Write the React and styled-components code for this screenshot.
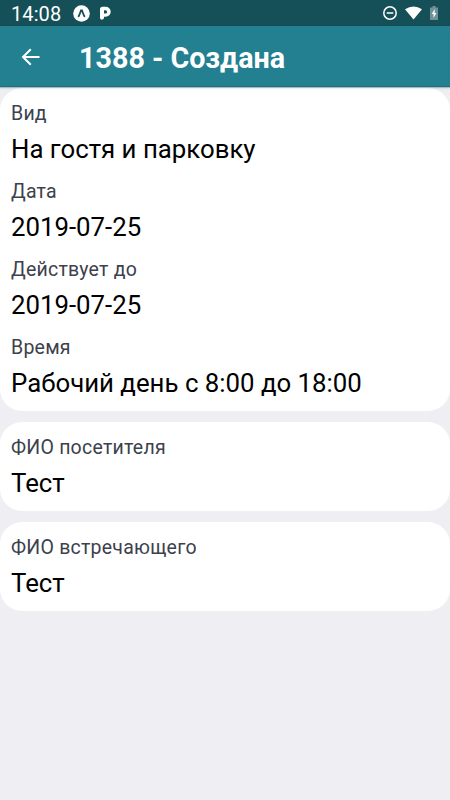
import React from 'react';
import styled, { createGlobalStyle } from 'styled-components';

const GlobalStyle = createGlobalStyle`
  * { box-sizing: border-box; }
  body { margin: 0; background: #efeef3; font-family: Roboto, sans-serif; }
`;
const Screen = styled.div`
  width: 450px; height: 800px; overflow: hidden;
  display: flex; flex-direction: column; background: #efeef3;
`;
const StatusBar = styled.header`
  height: 26px; flex: none; display: flex; align-items: center;
  padding: 0 12px 0 11px; background: #154f57; color: #fff;
`;
const Clock = styled.time`
  font-size: 20px; line-height: 26px; width: 62px; padding-top: 2px; letter-spacing: 0.1px;
`;
const StatusIcons = styled.div`
  display: flex; align-items: center; gap: ${(p) => (p.$end ? '8px' : '10px')};
  margin-left: ${(p) => (p.$end ? 'auto' : '0')};
  svg { display: block; }
`;
const Toolbar = styled.nav`
  height: 61px; flex: none; display: flex; align-items: center;
  padding-left: 21px; background: #238091; color: #fff;
  border-bottom: 1px solid #0d7788;
  box-shadow: 0 1px 1px rgba(0, 0, 0, 0.2), 0 1px 4px rgba(0, 0, 0, 0.08);
  z-index: 1;
`;
const BackButton = styled.button`
  border: 0; padding: 2px 0 0; background: none; color: inherit; width: 58px; height: 40px;
  display: flex; align-items: center;
`;
const Title = styled.h1`
  margin: 0; font-size: 28.7px; font-weight: 700; line-height: 36px; white-space: nowrap; padding-top: 4px;
`;
const Cards = styled.main`
  display: flex; flex-direction: column; gap: 11px; padding-top: 1px;
`;
const Card = styled.section`
  background: #fff; border-radius: 22px; padding: 11px 11px 9px;
`;
const Fields = styled.dl`
  margin: 0; display: flex; flex-direction: column;
`;
const Field = styled.div`
  height: 78px;
  &:last-child { height: 69px; }
`;
const Label = styled.dt`
  font-size: 19.5px; line-height: 28px; letter-spacing: 0.23px; padding-top: 1px; color: #3c414c; white-space: nowrap;
`;
const Value = styled.dd`
  margin: 5px 0 0; font-size: 25.8px; line-height: 32px; color: #000; white-space: nowrap;
`;

const groups = [
  [['Вид', 'На гостя и парковку'], ['Дата', '2019-07-25'], ['Действует до', '2019-07-25'], ['Время', 'Рабочий день с 8:00 до 18:00']],
  [['ФИО посетителя', 'Тест']],
  [['ФИО встречающего', 'Тест']],
];

export default function App() {
  return (
    <Screen>
      <GlobalStyle />
      <StatusBar>
        <Clock>14:08</Clock>
        <StatusIcons>
          <svg width="17" height="17" viewBox="0 0 17 17"><circle cx="8.5" cy="8.5" r="8.3" fill="#fff" /><path d="M5.2 11.9C6.4 10.5 7 8 8 5.4h1c1 2.6 1.6 5.1 2.8 6.5" fill="none" stroke="#154f57" strokeWidth="1.8" /></svg>
          <svg width="11" height="14" viewBox="0 0 11 14"><path fillRule="evenodd" fill="#fff" d="M0 6V3.2Q0 .7 2.5.7H5.7a5 5 0 0 1 0 10H4v.5A2 2 0 0 1 0 12ZM4 4.3V7.6H5.5a1.65 1.65 0 0 0 0-3.3Z" /></svg>
        </StatusIcons>
        <StatusIcons $end>
          <svg width="14" height="14" viewBox="0 0 14 14" fill="none" stroke="#fff" strokeWidth="1.5"><circle cx="7" cy="7" r="6.2" /><path d="M3.7 7h6.6" /></svg>
          <svg width="17" height="14" viewBox="0 0 17 14"><path d="M0 3.2Q8.5-2.4 17 3.2L8.5 13.5Z" fill="#fff" /></svg>
          <svg width="8" height="14" viewBox="0 0 8 14"><path d="M0 1.5h2.5V0h3v1.5H8V14H0Z" fill="#6f9298" /><path d="M4.7 3 1.8 8h1.7v4L6.4 7H4.7Z" fill="#fff" /></svg>
        </StatusIcons>
      </StatusBar>
      <Toolbar>
        <BackButton aria-label="Назад">
          <svg width="19" height="18" viewBox="0 0 19 18" fill="none" stroke="currentColor" strokeWidth="2"><path d="M18.5 9H2M9.8 1.2 2 9l7.8 7.8" /></svg>
        </BackButton>
        <Title>1388 - Создана</Title>
      </Toolbar>
      <Cards>
        {groups.map((fields, i) => (
          <Card key={i}><Fields>
            {fields.map(([label, value]) => (
              <Field key={label}><Label>{label}</Label><Value>{value}</Value></Field>
            ))}
          </Fields></Card>
        ))}
      </Cards>
    </Screen>
  );
}
